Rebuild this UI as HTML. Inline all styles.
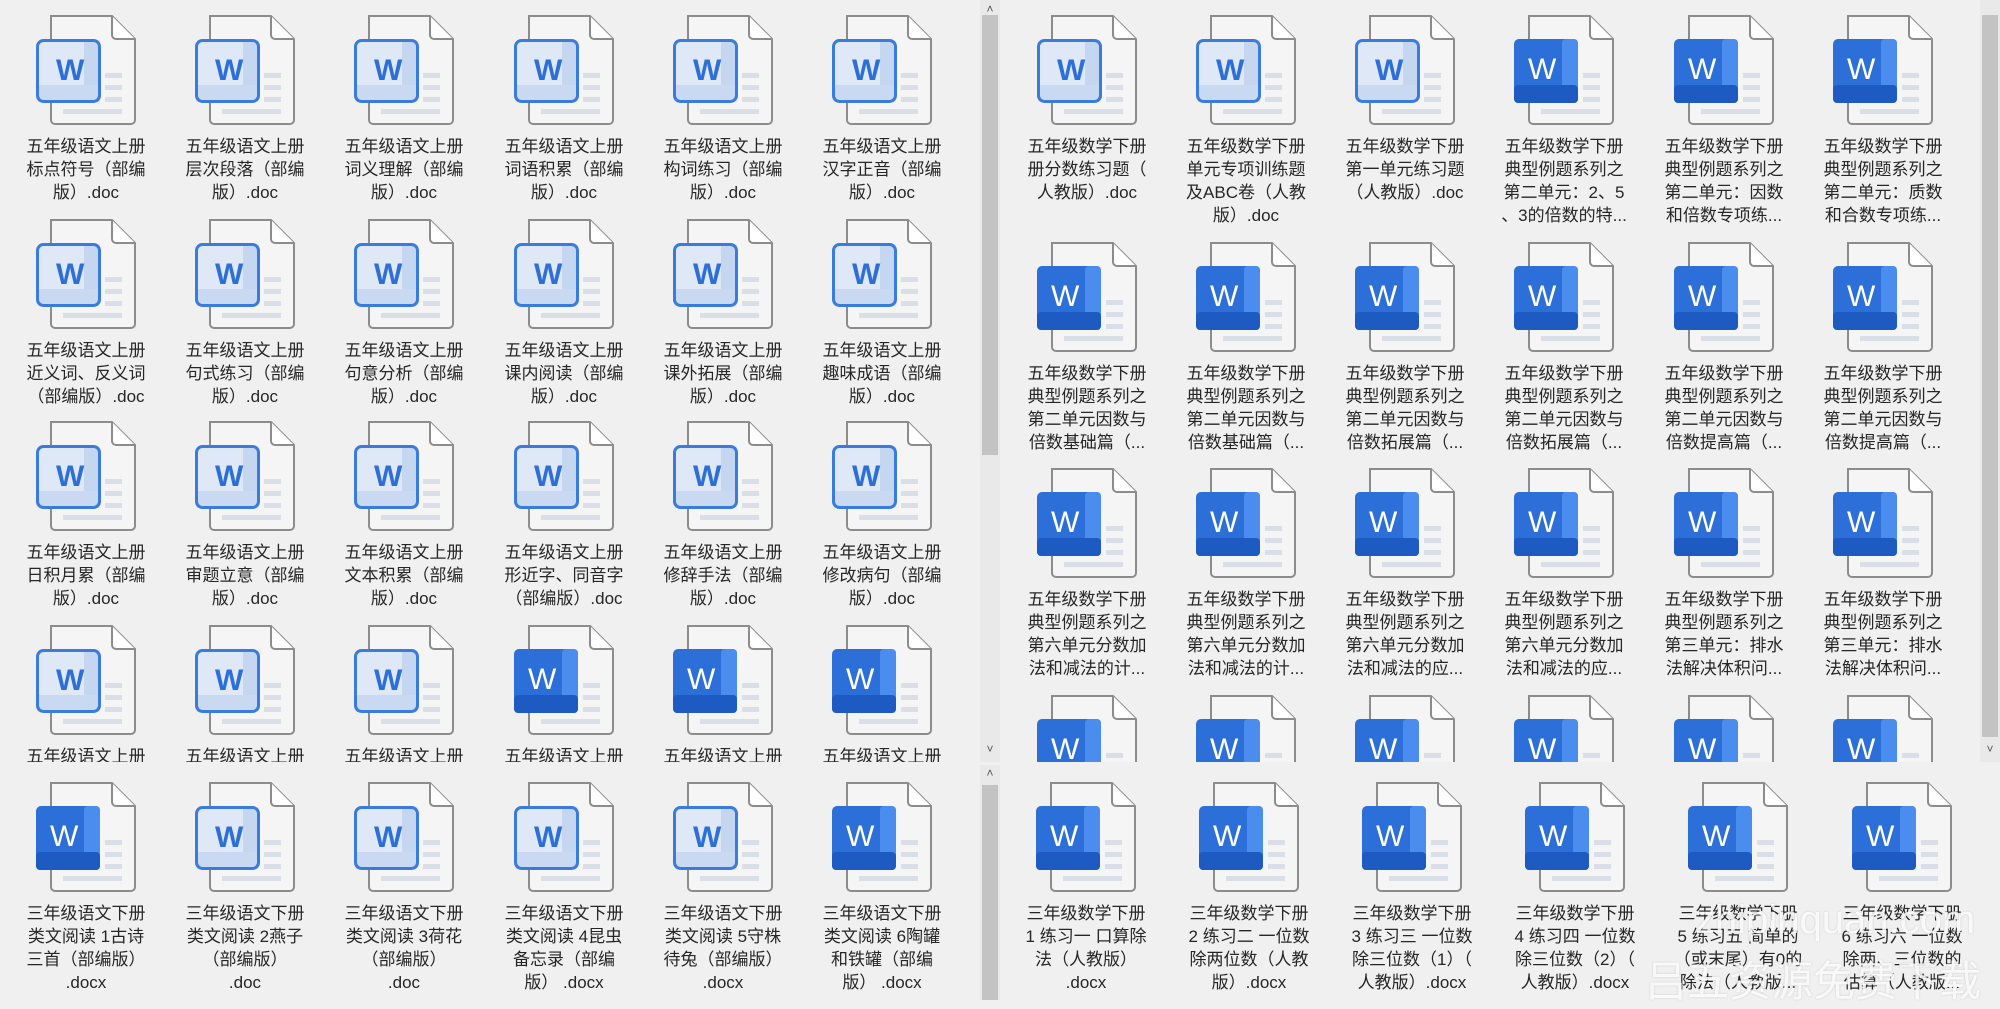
<!DOCTYPE html>
<html><head><meta charset="utf-8"><style>
html,body{margin:0;padding:0;width:2000px;height:1000px;overflow:hidden;background:#f0f0f0;font-family:"Liberation Sans","Noto Sans CJK SC",sans-serif;}
.p{position:absolute;overflow:hidden;background:#f0f0f0}
.c{position:absolute;width:160px;text-align:center;color:#262626;font-size:17px;line-height:23px}
.c svg{display:block;margin:0 auto}
.t{margin-top:10px;white-space:nowrap}
.sb{position:absolute;background:#e9e9e9}
.th{position:absolute;background:#c3c3c3}
.ar{position:absolute;font-size:12px;color:#555;width:20px;text-align:center}
.wm{position:absolute;color:rgba(255,255,255,0.85);white-space:nowrap;text-shadow:0 0 2px rgba(0,0,0,0.15)}
</style></head><body>
<svg width="0" height="0" style="position:absolute">
<symbol id="pg" viewBox="0 0 100 110">
<path d="M15 1H76L99 24V105a4 4 0 0 1-4 4H19a4 4 0 0 1-4-4Z" fill="#f5f5f5" stroke="#8c8c8c" stroke-width="2"/>
<path d="M76 1V20a4 4 0 0 0 4 4H99" fill="#fff" stroke="#8c8c8c" stroke-width="2"/>
<rect x="69" y="58" width="17" height="5" fill="#d9dee7"/><rect x="69" y="70" width="17" height="5" fill="#d9dee7"/><rect x="69" y="82" width="17" height="5" fill="#d9dee7"/><rect x="27" y="94" width="59" height="5" fill="#d9dee7"/>
</symbol>
<symbol id="L" viewBox="0 0 100 110">
<use href="#pg"/>
<rect x="1.5" y="25.5" width="62" height="61" rx="6" fill="#dfe8f7"/>
<rect x="48" y="25.5" width="15.5" height="61" fill="#c5d6f1"/>
<rect x="1.5" y="70" width="62" height="16.5" fill="#c9d9f2"/>
<rect x="1.5" y="25.5" width="62" height="61" rx="6" fill="none" stroke="#3a7be0" stroke-width="3"/>
</symbol>
<symbol id="S" viewBox="0 0 100 110">
<use href="#pg"/>
<rect x="0" y="24" width="64" height="64" rx="5" fill="#2c6fd9"/>
<rect x="48" y="24" width="16" height="64" rx="4" fill="#4b8cef"/>
<rect x="0" y="70" width="64" height="18" rx="4" fill="#1d5bc3"/>
</symbol>
</svg>

<!-- top-left panel -->
<div class="p" style="left:0;top:0;width:980px;height:762px">
<div class="c" style="left:6px;top:15px"><svg width="100" height="110"><use href="#L"/><text x="20" y="65" font-family="Liberation Sans" font-weight="bold" font-size="30" fill="#2d6fd8">W</text></svg><div class="t">五年级语文上册<br>标点符号（部编<br>版）.doc</div></div>
<div class="c" style="left:165px;top:15px"><svg width="100" height="110"><use href="#L"/><text x="20" y="65" font-family="Liberation Sans" font-weight="bold" font-size="30" fill="#2d6fd8">W</text></svg><div class="t">五年级语文上册<br>层次段落（部编<br>版）.doc</div></div>
<div class="c" style="left:324px;top:15px"><svg width="100" height="110"><use href="#L"/><text x="20" y="65" font-family="Liberation Sans" font-weight="bold" font-size="30" fill="#2d6fd8">W</text></svg><div class="t">五年级语文上册<br>词义理解（部编<br>版）.doc</div></div>
<div class="c" style="left:484px;top:15px"><svg width="100" height="110"><use href="#L"/><text x="20" y="65" font-family="Liberation Sans" font-weight="bold" font-size="30" fill="#2d6fd8">W</text></svg><div class="t">五年级语文上册<br>词语积累（部编<br>版）.doc</div></div>
<div class="c" style="left:643px;top:15px"><svg width="100" height="110"><use href="#L"/><text x="20" y="65" font-family="Liberation Sans" font-weight="bold" font-size="30" fill="#2d6fd8">W</text></svg><div class="t">五年级语文上册<br>构词练习（部编<br>版）.doc</div></div>
<div class="c" style="left:802px;top:15px"><svg width="100" height="110"><use href="#L"/><text x="20" y="65" font-family="Liberation Sans" font-weight="bold" font-size="30" fill="#2d6fd8">W</text></svg><div class="t">五年级语文上册<br>汉字正音（部编<br>版）.doc</div></div>

<div class="c" style="left:6px;top:219px"><svg width="100" height="110"><use href="#L"/><text x="20" y="65" font-family="Liberation Sans" font-weight="bold" font-size="30" fill="#2d6fd8">W</text></svg><div class="t">五年级语文上册<br>近义词、反义词<br>（部编版）.doc</div></div>
<div class="c" style="left:165px;top:219px"><svg width="100" height="110"><use href="#L"/><text x="20" y="65" font-family="Liberation Sans" font-weight="bold" font-size="30" fill="#2d6fd8">W</text></svg><div class="t">五年级语文上册<br>句式练习（部编<br>版）.doc</div></div>
<div class="c" style="left:324px;top:219px"><svg width="100" height="110"><use href="#L"/><text x="20" y="65" font-family="Liberation Sans" font-weight="bold" font-size="30" fill="#2d6fd8">W</text></svg><div class="t">五年级语文上册<br>句意分析（部编<br>版）.doc</div></div>
<div class="c" style="left:484px;top:219px"><svg width="100" height="110"><use href="#L"/><text x="20" y="65" font-family="Liberation Sans" font-weight="bold" font-size="30" fill="#2d6fd8">W</text></svg><div class="t">五年级语文上册<br>课内阅读（部编<br>版）.doc</div></div>
<div class="c" style="left:643px;top:219px"><svg width="100" height="110"><use href="#L"/><text x="20" y="65" font-family="Liberation Sans" font-weight="bold" font-size="30" fill="#2d6fd8">W</text></svg><div class="t">五年级语文上册<br>课外拓展（部编<br>版）.doc</div></div>
<div class="c" style="left:802px;top:219px"><svg width="100" height="110"><use href="#L"/><text x="20" y="65" font-family="Liberation Sans" font-weight="bold" font-size="30" fill="#2d6fd8">W</text></svg><div class="t">五年级语文上册<br>趣味成语（部编<br>版）.doc</div></div>

<div class="c" style="left:6px;top:421px"><svg width="100" height="110"><use href="#L"/><text x="20" y="65" font-family="Liberation Sans" font-weight="bold" font-size="30" fill="#2d6fd8">W</text></svg><div class="t">五年级语文上册<br>日积月累（部编<br>版）.doc</div></div>
<div class="c" style="left:165px;top:421px"><svg width="100" height="110"><use href="#L"/><text x="20" y="65" font-family="Liberation Sans" font-weight="bold" font-size="30" fill="#2d6fd8">W</text></svg><div class="t">五年级语文上册<br>审题立意（部编<br>版）.doc</div></div>
<div class="c" style="left:324px;top:421px"><svg width="100" height="110"><use href="#L"/><text x="20" y="65" font-family="Liberation Sans" font-weight="bold" font-size="30" fill="#2d6fd8">W</text></svg><div class="t">五年级语文上册<br>文本积累（部编<br>版）.doc</div></div>
<div class="c" style="left:484px;top:421px"><svg width="100" height="110"><use href="#L"/><text x="20" y="65" font-family="Liberation Sans" font-weight="bold" font-size="30" fill="#2d6fd8">W</text></svg><div class="t">五年级语文上册<br>形近字、同音字<br>（部编版）.doc</div></div>
<div class="c" style="left:643px;top:421px"><svg width="100" height="110"><use href="#L"/><text x="20" y="65" font-family="Liberation Sans" font-weight="bold" font-size="30" fill="#2d6fd8">W</text></svg><div class="t">五年级语文上册<br>修辞手法（部编<br>版）.doc</div></div>
<div class="c" style="left:802px;top:421px"><svg width="100" height="110"><use href="#L"/><text x="20" y="65" font-family="Liberation Sans" font-weight="bold" font-size="30" fill="#2d6fd8">W</text></svg><div class="t">五年级语文上册<br>修改病句（部编<br>版）.doc</div></div>

<div class="c" style="left:6px;top:625px"><svg width="100" height="110"><use href="#L"/><text x="20" y="65" font-family="Liberation Sans" font-weight="bold" font-size="30" fill="#2d6fd8">W</text></svg><div class="t">五年级语文上册</div></div>
<div class="c" style="left:165px;top:625px"><svg width="100" height="110"><use href="#L"/><text x="20" y="65" font-family="Liberation Sans" font-weight="bold" font-size="30" fill="#2d6fd8">W</text></svg><div class="t">五年级语文上册</div></div>
<div class="c" style="left:324px;top:625px"><svg width="100" height="110"><use href="#L"/><text x="20" y="65" font-family="Liberation Sans" font-weight="bold" font-size="30" fill="#2d6fd8">W</text></svg><div class="t">五年级语文上册</div></div>
<div class="c" style="left:484px;top:625px"><svg width="100" height="110"><use href="#S"/><text x="14" y="64" font-family="Liberation Sans" font-size="30" fill="#fff">W</text></svg><div class="t">五年级语文上册</div></div>
<div class="c" style="left:643px;top:625px"><svg width="100" height="110"><use href="#S"/><text x="14" y="64" font-family="Liberation Sans" font-size="30" fill="#fff">W</text></svg><div class="t">五年级语文上册</div></div>
<div class="c" style="left:802px;top:625px"><svg width="100" height="110"><use href="#S"/><text x="14" y="64" font-family="Liberation Sans" font-size="30" fill="#fff">W</text></svg><div class="t">五年级语文上册</div></div>
</div>
<div class="sb" style="left:980px;top:0;width:20px;height:762px"></div>
<div class="th" style="left:982px;top:15px;width:16px;height:440px"></div>
<div class="ar" style="left:980px;top:2px">˄</div>
<div class="ar" style="left:980px;top:742px">˅</div>

<!-- bottom-left panel -->
<div class="p" style="left:0;top:765px;width:980px;height:235px">
<div class="c" style="left:6px;top:17px"><svg width="100" height="110"><use href="#S"/><text x="14" y="64" font-family="Liberation Sans" font-size="30" fill="#fff">W</text></svg><div class="t">三年级语文下册<br>类文阅读 1古诗<br>三首（部编版）<br>.docx</div></div>
<div class="c" style="left:165px;top:17px"><svg width="100" height="110"><use href="#L"/><text x="20" y="65" font-family="Liberation Sans" font-weight="bold" font-size="30" fill="#2d6fd8">W</text></svg><div class="t">三年级语文下册<br>类文阅读 2燕子<br>（部编版）<br>.doc</div></div>
<div class="c" style="left:324px;top:17px"><svg width="100" height="110"><use href="#L"/><text x="20" y="65" font-family="Liberation Sans" font-weight="bold" font-size="30" fill="#2d6fd8">W</text></svg><div class="t">三年级语文下册<br>类文阅读 3荷花<br>（部编版）<br>.doc</div></div>
<div class="c" style="left:484px;top:17px"><svg width="100" height="110"><use href="#L"/><text x="20" y="65" font-family="Liberation Sans" font-weight="bold" font-size="30" fill="#2d6fd8">W</text></svg><div class="t">三年级语文下册<br>类文阅读 4昆虫<br>备忘录（部编<br>版） .docx</div></div>
<div class="c" style="left:643px;top:17px"><svg width="100" height="110"><use href="#L"/><text x="20" y="65" font-family="Liberation Sans" font-weight="bold" font-size="30" fill="#2d6fd8">W</text></svg><div class="t">三年级语文下册<br>类文阅读 5守株<br>待兔（部编版）<br>.docx</div></div>
<div class="c" style="left:802px;top:17px"><svg width="100" height="110"><use href="#S"/><text x="14" y="64" font-family="Liberation Sans" font-size="30" fill="#fff">W</text></svg><div class="t">三年级语文下册<br>类文阅读 6陶罐<br>和铁罐（部编<br>版） .docx</div></div>
</div>
<div class="sb" style="left:980px;top:765px;width:20px;height:235px"></div>
<div class="th" style="left:982px;top:785px;width:16px;height:215px"></div>
<div class="ar" style="left:980px;top:766px">˄</div>

<!-- top-right panel -->
<div class="p" style="left:1003px;top:0;width:977px;height:762px">
<div class="c" style="left:4px;top:15px"><svg width="100" height="110"><use href="#L"/><text x="20" y="65" font-family="Liberation Sans" font-weight="bold" font-size="30" fill="#2d6fd8">W</text></svg><div class="t">五年级数学下册<br>册分数练习题（<br>人教版）.doc</div></div>
<div class="c" style="left:163px;top:15px"><svg width="100" height="110"><use href="#L"/><text x="20" y="65" font-family="Liberation Sans" font-weight="bold" font-size="30" fill="#2d6fd8">W</text></svg><div class="t">五年级数学下册<br>单元专项训练题<br>及ABC卷（人教<br>版）.doc</div></div>
<div class="c" style="left:322px;top:15px"><svg width="100" height="110"><use href="#L"/><text x="20" y="65" font-family="Liberation Sans" font-weight="bold" font-size="30" fill="#2d6fd8">W</text></svg><div class="t">五年级数学下册<br>第一单元练习题<br>（人教版）.doc</div></div>
<div class="c" style="left:481px;top:15px"><svg width="100" height="110"><use href="#S"/><text x="14" y="64" font-family="Liberation Sans" font-size="30" fill="#fff">W</text></svg><div class="t">五年级数学下册<br>典型例题系列之<br>第二单元：2、5<br>、3的倍数的特...</div></div>
<div class="c" style="left:641px;top:15px"><svg width="100" height="110"><use href="#S"/><text x="14" y="64" font-family="Liberation Sans" font-size="30" fill="#fff">W</text></svg><div class="t">五年级数学下册<br>典型例题系列之<br>第二单元：因数<br>和倍数专项练...</div></div>
<div class="c" style="left:800px;top:15px"><svg width="100" height="110"><use href="#S"/><text x="14" y="64" font-family="Liberation Sans" font-size="30" fill="#fff">W</text></svg><div class="t">五年级数学下册<br>典型例题系列之<br>第二单元：质数<br>和合数专项练...</div></div>

<div class="c" style="left:4px;top:242px"><svg width="100" height="110"><use href="#S"/><text x="14" y="64" font-family="Liberation Sans" font-size="30" fill="#fff">W</text></svg><div class="t">五年级数学下册<br>典型例题系列之<br>第二单元因数与<br>倍数基础篇（...</div></div>
<div class="c" style="left:163px;top:242px"><svg width="100" height="110"><use href="#S"/><text x="14" y="64" font-family="Liberation Sans" font-size="30" fill="#fff">W</text></svg><div class="t">五年级数学下册<br>典型例题系列之<br>第二单元因数与<br>倍数基础篇（...</div></div>
<div class="c" style="left:322px;top:242px"><svg width="100" height="110"><use href="#S"/><text x="14" y="64" font-family="Liberation Sans" font-size="30" fill="#fff">W</text></svg><div class="t">五年级数学下册<br>典型例题系列之<br>第二单元因数与<br>倍数拓展篇（...</div></div>
<div class="c" style="left:481px;top:242px"><svg width="100" height="110"><use href="#S"/><text x="14" y="64" font-family="Liberation Sans" font-size="30" fill="#fff">W</text></svg><div class="t">五年级数学下册<br>典型例题系列之<br>第二单元因数与<br>倍数拓展篇（...</div></div>
<div class="c" style="left:641px;top:242px"><svg width="100" height="110"><use href="#S"/><text x="14" y="64" font-family="Liberation Sans" font-size="30" fill="#fff">W</text></svg><div class="t">五年级数学下册<br>典型例题系列之<br>第二单元因数与<br>倍数提高篇（...</div></div>
<div class="c" style="left:800px;top:242px"><svg width="100" height="110"><use href="#S"/><text x="14" y="64" font-family="Liberation Sans" font-size="30" fill="#fff">W</text></svg><div class="t">五年级数学下册<br>典型例题系列之<br>第二单元因数与<br>倍数提高篇（...</div></div>

<div class="c" style="left:4px;top:468px"><svg width="100" height="110"><use href="#S"/><text x="14" y="64" font-family="Liberation Sans" font-size="30" fill="#fff">W</text></svg><div class="t">五年级数学下册<br>典型例题系列之<br>第六单元分数加<br>法和减法的计...</div></div>
<div class="c" style="left:163px;top:468px"><svg width="100" height="110"><use href="#S"/><text x="14" y="64" font-family="Liberation Sans" font-size="30" fill="#fff">W</text></svg><div class="t">五年级数学下册<br>典型例题系列之<br>第六单元分数加<br>法和减法的计...</div></div>
<div class="c" style="left:322px;top:468px"><svg width="100" height="110"><use href="#S"/><text x="14" y="64" font-family="Liberation Sans" font-size="30" fill="#fff">W</text></svg><div class="t">五年级数学下册<br>典型例题系列之<br>第六单元分数加<br>法和减法的应...</div></div>
<div class="c" style="left:481px;top:468px"><svg width="100" height="110"><use href="#S"/><text x="14" y="64" font-family="Liberation Sans" font-size="30" fill="#fff">W</text></svg><div class="t">五年级数学下册<br>典型例题系列之<br>第六单元分数加<br>法和减法的应...</div></div>
<div class="c" style="left:641px;top:468px"><svg width="100" height="110"><use href="#S"/><text x="14" y="64" font-family="Liberation Sans" font-size="30" fill="#fff">W</text></svg><div class="t">五年级数学下册<br>典型例题系列之<br>第三单元：排水<br>法解决体积问...</div></div>
<div class="c" style="left:800px;top:468px"><svg width="100" height="110"><use href="#S"/><text x="14" y="64" font-family="Liberation Sans" font-size="30" fill="#fff">W</text></svg><div class="t">五年级数学下册<br>典型例题系列之<br>第三单元：排水<br>法解决体积问...</div></div>

<div class="c" style="left:4px;top:695px"><svg width="100" height="110"><use href="#S"/><text x="14" y="64" font-family="Liberation Sans" font-size="30" fill="#fff">W</text></svg></div>
<div class="c" style="left:163px;top:695px"><svg width="100" height="110"><use href="#S"/><text x="14" y="64" font-family="Liberation Sans" font-size="30" fill="#fff">W</text></svg></div>
<div class="c" style="left:322px;top:695px"><svg width="100" height="110"><use href="#S"/><text x="14" y="64" font-family="Liberation Sans" font-size="30" fill="#fff">W</text></svg></div>
<div class="c" style="left:481px;top:695px"><svg width="100" height="110"><use href="#S"/><text x="14" y="64" font-family="Liberation Sans" font-size="30" fill="#fff">W</text></svg></div>
<div class="c" style="left:641px;top:695px"><svg width="100" height="110"><use href="#S"/><text x="14" y="64" font-family="Liberation Sans" font-size="30" fill="#fff">W</text></svg></div>
<div class="c" style="left:800px;top:695px"><svg width="100" height="110"><use href="#S"/><text x="14" y="64" font-family="Liberation Sans" font-size="30" fill="#fff">W</text></svg></div>
</div>
<div class="sb" style="left:1980px;top:0;width:20px;height:762px"></div>
<div class="th" style="left:1982px;top:15px;width:16px;height:722px"></div>
<div class="ar" style="left:1980px;top:742px">˅</div>

<!-- bottom-right panel -->
<div class="p" style="left:1003px;top:765px;width:997px;height:235px">
<div class="c" style="left:3px;top:17px"><svg width="100" height="110"><use href="#S"/><text x="14" y="64" font-family="Liberation Sans" font-size="30" fill="#fff">W</text></svg><div class="t">三年级数学下册<br>1 练习一 口算除<br>法（人教版）<br>.docx</div></div>
<div class="c" style="left:166px;top:17px"><svg width="100" height="110"><use href="#S"/><text x="14" y="64" font-family="Liberation Sans" font-size="30" fill="#fff">W</text></svg><div class="t">三年级数学下册<br>2 练习二 一位数<br>除两位数（人教<br>版）.docx</div></div>
<div class="c" style="left:329px;top:17px"><svg width="100" height="110"><use href="#S"/><text x="14" y="64" font-family="Liberation Sans" font-size="30" fill="#fff">W</text></svg><div class="t">三年级数学下册<br>3 练习三 一位数<br>除三位数（1）（<br>人教版）.docx</div></div>
<div class="c" style="left:492px;top:17px"><svg width="100" height="110"><use href="#S"/><text x="14" y="64" font-family="Liberation Sans" font-size="30" fill="#fff">W</text></svg><div class="t">三年级数学下册<br>4 练习四 一位数<br>除三位数（2）（<br>人教版）.docx</div></div>
<div class="c" style="left:655px;top:17px"><svg width="100" height="110"><use href="#S"/><text x="14" y="64" font-family="Liberation Sans" font-size="30" fill="#fff">W</text></svg><div class="t">三年级数学下册<br>5 练习五 简单的<br>（或末尾）有0的<br>除法（人教版...</div></div>
<div class="c" style="left:819px;top:17px"><svg width="100" height="110"><use href="#S"/><text x="14" y="64" font-family="Liberation Sans" font-size="30" fill="#fff">W</text></svg><div class="t">三年级数学下册<br>6 练习六 一位数<br>除两、三位数的<br>估算（人教版...</div></div>
</div>
<div class="wm" style="left:1695px;top:898px;font-size:40px">zhipinquan.com</div>
<div class="wm" style="left:1645px;top:948px;font-size:42px">吕五资源免费下载</div>
</body></html>
